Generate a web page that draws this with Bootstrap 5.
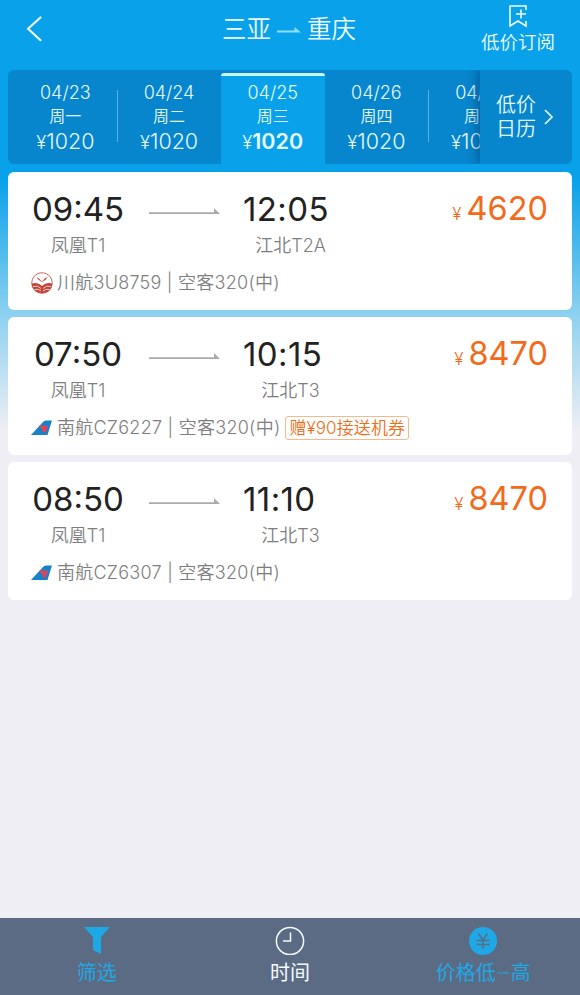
<!DOCTYPE html>
<html lang="zh-CN">
<head>
    <meta charset="UTF-8">
    <meta name="viewport" content="width=device-width, initial-scale=1">
    <title>三亚 - 重庆</title>
    <link rel="stylesheet" href="https://cdn.jsdelivr.net/npm/bootstrap@5.3.0/dist/css/bootstrap.min.css">
    <style>
        body {
            font-family: Inter, "Noto Sans CJK SC", sans-serif;
            height: 995px;
            overflow: hidden;
            line-height: 1;
            background: linear-gradient(#09a2ea 0, #09a2ea 180px, #8ed1f0 315px, #eeeef4 430px);
        }
        svg { display: block; flex: none; }

        /* header */
        .top-bar { height: 70px; color: #eefcff; }
        .top-side { width: 124px; }
        .back-btn { padding: 15px 0 0 26px; }
        .route { font-size: 24.5px; padding-top: 14px; height: 44px; font-weight: 350; line-height: 28px; margin-left: -2px; }
        .route svg { margin: 2px 6px 0 6px; }
        .subscribe { font-size: 18.5px; font-weight: 350; padding: 5px 0 0 0; line-height: 28px; }

        /* date strip */
        .date-strip { height: 94px; margin: 0 8px; background: #0785cd; border-radius: 6px; color: #e4faff; }
        .date-list { padding-left: 6px; }
        .date-cell { flex: 0 0 103.7px; padding: 7px 1px 0 0; font-weight: 350; border-top: 3px solid transparent; height: 91px; margin-top: 3px; }
        .date-cell .day { font-size: 18px; line-height: 20px; }
        .date-cell .week { font-size: 16px; line-height: 20px; margin-top: 3px; }
        .date-cell .fare { font-size: 21.500px; line-height: 24px; margin-top: 3px; }
        .date-cell .fare span { font-size: 18.500px; }
        .date-cell.active { background: #09a2ea; border-top-color: #c9f3ff; border-radius: 3px 3px 0 0; }
        .date-cell.active b { font-weight: 600; }
        .date-line { flex: none; width: 1px; height: 52px; margin: 20px 0 0 -1px; background: #4fb4e8; }
        .calendar-btn { flex: none; width: 92px; font-size: 20px; font-weight: 350; line-height: 24px; background: #0785cd; border-radius: 0 6px 6px 0; box-shadow: -4px 0 9px rgba(0, 70, 125, .5); clip-path: inset(0 0 0 -20px); padding-right: 2px; z-index: 1; }

        /* flights */
        .flights { padding: 8px 8px 0; gap: 7px; }
        .flight { height: 138px; border-radius: 6px; padding: 19px 24px 0; color: #7e7e7e; font-weight: 350; }
        .flight .clock { font-size: 33px; line-height: 36px; color: #222; font-weight: 400; }
        .flight .port { font-size: 18px; line-height: 22px; margin-top: 8px; }
        .leg-from { width: 92px; }
        .leg-to { width: 94px; }
        .leg-to .clock { margin-left: -1px; letter-spacing: .4px; }
        .leg-to .port { margin-left: -1px; }
        .leg-arrow { margin: 17px 24px 0 25px; }
        .price { font-size: 32.500px; line-height: 36px; color: #f36a1d; font-weight: 400; }
        .price span { font-size: 17px; font-weight: 350; margin-right: 5px; }
        .carrier { font-size: 18px; line-height: 24px; margin-top: 14px; letter-spacing: .25px; }
        .carrier svg { margin: 0 4px 0 -1px; }
        .coupon { font-size: 17px; line-height: 22px; color: #ef6c17; border: 1px solid #f7b98a; border-radius: 3px; padding: 0 3px; margin-left: 5px; letter-spacing: .1px; }

        /* bottom bar */
        .tool-bar { height: 77px; background: #5b6b83; color: #f4fbff; font-size: 20px; line-height: 26px; }
        .tool-bar .tool { padding-top: 7px; }
        .tool-bar .on { color: #1ea8e6; }
        .tool svg { margin-bottom: 5px; }
    </style>
</head>
<body class="d-flex flex-column">
    <header class="top-bar d-flex justify-content-between flex-shrink-0">
        <div class="top-side back-btn">
            <svg width="18" height="28" viewBox="0 0 18 28" fill="none" stroke="currentColor" stroke-width="2.2" stroke-linecap="round" stroke-linejoin="round"><path d="M14.500 2.500L2 13.700l12.500 11.500"/></svg>
        </div>
        <div class="route d-flex align-items-center">
            三亚
            <svg width="24" height="8" viewBox="0 0 24 8" fill="#8fe0f6"><path d="M0 4.500h17.500V1L24 6.500H0z"/></svg>
            重庆
        </div>
        <div class="top-side subscribe d-flex flex-column align-items-center">
            <svg width="20" height="23" viewBox="0 0 20 23" fill="none" stroke="currentColor" stroke-width="1.600"><path d="M18 5V1H2v20l8-5 8 5v-5M8 9h10M13 4.500v9"/></svg>
            低价订阅
        </div>
    </header>

    <div class="date-strip d-flex flex-shrink-0 overflow-hidden">
        <div class="date-list d-flex flex-grow-1 overflow-hidden text-center">
            <div class="date-cell">
                <div class="day">04/23</div>
                <div class="week">周一</div>
                <div class="fare"><span>¥</span>1020</div>
            </div>
            <div class="date-line"></div>
            <div class="date-cell">
                <div class="day">04/24</div>
                <div class="week">周二</div>
                <div class="fare"><span>¥</span>1020</div>
            </div>
            <div class="date-cell active">
                <div class="day">04/25</div>
                <div class="week">周三</div>
                <div class="fare"><span>¥</span><b>1020</b></div>
            </div>
            <div class="date-cell">
                <div class="day">04/26</div>
                <div class="week">周四</div>
                <div class="fare"><span>¥</span>1020</div>
            </div>
            <div class="date-line"></div>
            <div class="date-cell">
                <div class="day">04/27</div>
                <div class="week">周五</div>
                <div class="fare"><span>¥</span>1020</div>
            </div>
        </div>
        <div class="calendar-btn d-flex align-items-center justify-content-center gap-2">
            <div>低价<br>日历</div>
            <svg width="10" height="16" viewBox="0 0 10 16" fill="none" stroke="currentColor" stroke-width="1.700"><path d="M1 1l7 7-7 7"/></svg>
        </div>
    </div>

    <main class="flights d-flex flex-column flex-grow-1">
        <div class="flight bg-white">
            <div class="d-flex">
                <div class="leg-from text-center">
                    <div class="clock">09:45</div>
                    <div class="port">凤凰T1</div>
                </div>
                <svg class="leg-arrow" width="71" height="7" viewBox="0 0 71 7" fill="#aaa"><path d="M0 4.300h65V0l6 6H0z"/></svg>
                <div class="leg-to">
                    <div class="clock">12:05</div>
                    <div class="port text-center">江北T2A</div>
                </div>
                <div class="price ms-auto"><span>¥</span>4620</div>
            </div>
            <div class="carrier d-flex align-items-center">
                <svg width="22" height="22" viewBox="0 0 22 22" fill="none" stroke="#c3453a">
                    <circle cx="11" cy="11" r="10.300" stroke-width=".8"/>
                    <path d="M.8 11.500C5 10 8 11.500 11 14c3-2.500 6-4 10.200-2.500C21 17.500 16.500 21.300 11 21.300S1 17.500.8 11.500z" fill="#c3453a" stroke="none"/>
                    <path d="M2 14.500q5-1.500 8 2M3.500 17.500q4-1 6.500 1.500M20 14.500q-5-1.500-8 2M18.500 17.500q-4-1-6.500 1.500" stroke="#fff" stroke-width=".7"/>
                    <path d="M5.500 5l2.200 1.200L11 9.500l3-3.300L16.500 5l-1.800 2.700L11 10 7.500 7.800z" fill="#c3453a" stroke="none"/>
                </svg>
                川航3U8759 | 空客320(中)
            </div>
        </div>

        <div class="flight bg-white">
            <div class="d-flex">
                <div class="leg-from text-center">
                    <div class="clock">07:50</div>
                    <div class="port">凤凰T1</div>
                </div>
                <svg class="leg-arrow" width="71" height="7" viewBox="0 0 71 7" fill="#aaa"><path d="M0 4.300h65V0l6 6H0z"/></svg>
                <div class="leg-to">
                    <div class="clock">10:15</div>
                    <div class="port text-center">江北T3</div>
                </div>
                <div class="price ms-auto"><span>¥</span>8470</div>
            </div>
            <div class="carrier d-flex align-items-center">
                <svg width="22" height="16" viewBox="0 0 22 16">
                    <path d="M0 15L12 2q1-1.500 3-1.500h6L16.500 15z" fill="#1782c8"/>
                    <path d="M8.500 5.500q2-.5 3.500.5 1.500-1.500 2.500 0 1.500-.8 2.500 0-.2 2-1.500 3.200v2.300l-1.500 1.500-2.500-1.500V9.500Q9 8.500 8.500 5.500z" fill="#e2415a"/>
                </svg>
                南航CZ6227 | 空客320(中)
                <span class="coupon">赠¥90接送机券</span>
            </div>
        </div>

        <div class="flight bg-white">
            <div class="d-flex">
                <div class="leg-from text-center">
                    <div class="clock">08:50</div>
                    <div class="port">凤凰T1</div>
                </div>
                <svg class="leg-arrow" width="71" height="7" viewBox="0 0 71 7" fill="#aaa"><path d="M0 4.300h65V0l6 6H0z"/></svg>
                <div class="leg-to">
                    <div class="clock">11:10</div>
                    <div class="port text-center">江北T3</div>
                </div>
                <div class="price ms-auto"><span>¥</span>8470</div>
            </div>
            <div class="carrier d-flex align-items-center">
                <svg width="22" height="16" viewBox="0 0 22 16">
                    <path d="M0 15L12 2q1-1.500 3-1.500h6L16.500 15z" fill="#1782c8"/>
                    <path d="M8.500 5.500q2-.5 3.500.5 1.500-1.500 2.500 0 1.500-.8 2.500 0-.2 2-1.500 3.200v2.300l-1.500 1.500-2.500-1.500V9.500Q9 8.500 8.500 5.500z" fill="#e2415a"/>
                </svg>
                南航CZ6307 | 空客320(中)
            </div>
        </div>
    </main>

    <footer class="tool-bar row g-0 flex-shrink-0">
        <div class="tool on col-4 d-flex flex-column align-items-center">
            <svg width="28" height="30" viewBox="0 0 28 30" fill="currentColor"><path d="M1 2h26l-9 10v17l-8-4V12z"/></svg>
            筛选
        </div>
        <div class="tool col-4 d-flex flex-column align-items-center">
            <svg width="30" height="30" viewBox="0 0 30 30" fill="none" stroke="currentColor" stroke-width="1.500"><circle cx="15" cy="16" r="13.600"/><path d="M15.500 7.500V16H8"/></svg>
            时间
        </div>
        <div class="tool on col-4 d-flex flex-column align-items-center">
            <svg width="30" height="30" viewBox="0 0 30 30" fill="none" stroke="#5b6b83" stroke-width="1.400"><circle cx="15" cy="16" r="14" fill="#1ea8e6" stroke="none"/><path d="M10.500 8.500l4.500 6.500 4.500-6.500M15 15v9M8.500 15.500h13M8.500 19.500h13"/></svg>
            <div class="d-flex align-items-center">
                价格低
                <svg class="mb-0" width="15" height="6" viewBox="0 0 16 6" fill="currentColor"><path d="M1 2.500h9V1l5 2.500H1z"/></svg>
                高
            </div>
        </div>
    </footer>

    <script src="https://cdn.jsdelivr.net/npm/bootstrap@5.3.0/dist/js/bootstrap.bundle.min.js"></script>
</body>
</html>
